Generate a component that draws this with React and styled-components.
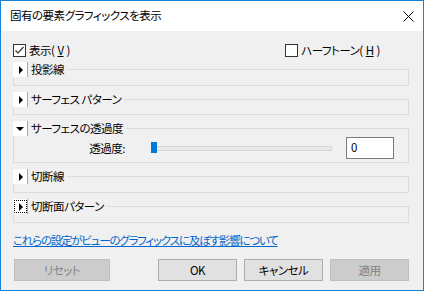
import React from 'react';
import styled, { createGlobalStyle } from 'styled-components';

const GlobalStyle = createGlobalStyle`
  html, body {
    margin: 0;
    padding: 0;
    background: #ffffff;
  }
  body {
    font-family: "Noto Sans CJK JP", "Liberation Sans", sans-serif;
    font-size: 11.5px;
    letter-spacing: -0.5px;
    color: #000;
    font-feature-settings: "palt";
  }
`;

const Window = styled.div`
  box-sizing: border-box;
  width: 424px;
  height: 291px;
  border: 1px solid #1883d7;
  display: flex;
  flex-direction: column;
  background: #f0f0f0;
`;

const TitleBar = styled.div`
  height: 30px;
  background: #ffffff;
  display: flex;
  align-items: center;
  justify-content: space-between;
  padding: 0 9px 0 9px;
  line-height: 1;
`;

const CloseIcon = styled.svg`
  width: 11px;
  height: 11px;
  margin-top: 1px;
`;

const Body = styled.div`
  flex: 1;
  display: flex;
  flex-direction: column;
  padding: 12px 14px 0 12px;
`;

const CheckRow = styled.div`
  display: flex;
  justify-content: space-between;
  height: 14px;
  padding-right: 29px;
`;

const CheckLabel = styled.label`
  display: flex;
  align-items: center;
  gap: 3px;
  line-height: 14px;
`;

const Box = styled.span`
  box-sizing: border-box;
  width: 13px;
  height: 13px;
  border: 1px solid #333;
  background: #fff;
  display: inline-flex;
  align-items: center;
  justify-content: center;
`;

const Group = styled.fieldset`
  margin: ${({ $top }) => $top}px 0 0 0;
  padding: 0;
  border: 1px solid #dcdcdc;
  min-width: 0;
`;

const GroupBody = styled.div`
  height: ${({ $h }) => $h}px;
  display: flex;
  align-items: flex-start;
`;

const Legend = styled.legend`
  margin-left: -1px;
  padding: 0 3px 0 0;
  display: flex;
  align-items: center;
  height: 15px;
  line-height: 15px;
`;

const Toggle = styled.span`
  box-sizing: border-box;
  width: 15px;
  height: 15px;
  background: #fff;
  border-right: 1px solid #a8a8a8;
  display: inline-flex;
  align-items: center;
  justify-content: center;
  margin-right: 3px;
  outline: ${({ $focus }) => ($focus ? '1px dotted #000' : 'none')};
  outline-offset: -2px;
`;

const Arrow = styled.span`
  width: 0;
  height: 0;
  ${({ $open }) =>
    $open
      ? `border-left: 4px solid transparent;
         border-right: 4px solid transparent;
         border-top: 4px solid #000;
         margin-top: 1px;`
      : `border-top: 4px solid transparent;
         border-bottom: 4px solid transparent;
         border-left: 4px solid #000;
         margin-left: 1px;`}
`;

const SliderRow = styled.div`
  display: flex;
  align-items: center;
  width: 100%;
  margin-top: 1px;
  height: 22px;
`;

const FieldLabel = styled.span`
  width: 111px;
  text-align: right;
  margin-right: 26px;
`;

const Track = styled.div`
  position: relative;
  width: 179px;
  height: 3px;
  background: #e7eaea;
  border: 1px solid #d6d6d6;
  margin-right: 14px;
`;

const Thumb = styled.span`
  position: absolute;
  left: -1px;
  top: -5px;
  width: 6px;
  height: 11px;
  background: #0078d7;
`;

const Input = styled.div`
  box-sizing: border-box;
  width: 48px;
  height: 22px;
  border: 1px solid #7a7a7a;
  background: #fff;
  padding-left: 4px;
  line-height: 19px;
`;

const Link = styled.a`
  margin-top: 10px;
  color: #0066cc;
  text-decoration: underline;
  line-height: 14px;
  letter-spacing: -1.2px;
  align-self: flex-start;
`;

const ButtonRow = styled.div`
  display: flex;
  gap: 7px;
  margin-top: 12px;
  padding-left: 1px;
`;

const Button = styled.button`
  box-sizing: border-box;
  width: ${({ $w }) => $w || 79}px;
  height: 22px;
  font: inherit;
  letter-spacing: inherit;
  font-feature-settings: "palt";
  padding: 0;
  background: ${({ disabled }) => (disabled ? '#cccccc' : '#e1e1e1')};
  border: 1px solid ${({ disabled }) => (disabled ? '#bfbfbf' : '#adadad')};
  color: ${({ disabled }) => (disabled ? '#838383' : '#000')};
  margin-left: ${({ $push }) => ($push ? 'auto' : '0')};
`;

const sections = [
  { title: '投影線', top: 5, inner: 8 },
  { title: 'サーフェス パターン', top: 6, inner: 7 },
  { title: 'サーフェスの透過度', top: 6, inner: 26, open: true },
  { title: '切断線', top: 6, inner: 8 },
  { title: '切断面パターン', top: 6, inner: 8, focus: true },
];

export default function App() {
  return (
    <>
      <GlobalStyle />
      <Window>
        <TitleBar>
          <span>固有の要素グラフィックスを表示</span>
          <CloseIcon viewBox="0 0 11 11">
            <path d="M0.5 0.5 L10.5 10.5 M10.5 0.5 L0.5 10.5" stroke="#000" strokeWidth="1" fill="none" />
          </CloseIcon>
        </TitleBar>
        <Body>
          <CheckRow>
            <CheckLabel>
              <Box>
                <svg width="11" height="11" viewBox="0 0 11 11">
                  <path d="M1.5 5.5 L4 8 L9.5 2" stroke="#333" strokeWidth="1.2" fill="none" />
                </svg>
              </Box>
              表示(<u>V</u>)
            </CheckLabel>
            <CheckLabel>
              <Box />
              ハーフトーン(<u>H</u>)
            </CheckLabel>
          </CheckRow>

          {sections.map((s) => (
            <Group key={s.title} $top={s.top}>
              <Legend>
                <Toggle $focus={s.focus}>
                  <Arrow $open={s.open} />
                </Toggle>
                {s.title}
              </Legend>
              <GroupBody $h={s.inner}>
                {s.open && (
                  <SliderRow>
                    <FieldLabel>透過度:</FieldLabel>
                    <Track>
                      <Thumb />
                    </Track>
                    <Input>0</Input>
                  </SliderRow>
                )}
              </GroupBody>
            </Group>
          ))}

          <Link href="#">これらの設定がビューのグラフィックスに及ぼす影響について</Link>

          <ButtonRow>
            <Button disabled $w={96}>リセット</Button>
            <Button $push>OK</Button>
            <Button>キャンセル</Button>
            <Button disabled>適用</Button>
          </ButtonRow>
        </Body>
      </Window>
    </>
  );
}
